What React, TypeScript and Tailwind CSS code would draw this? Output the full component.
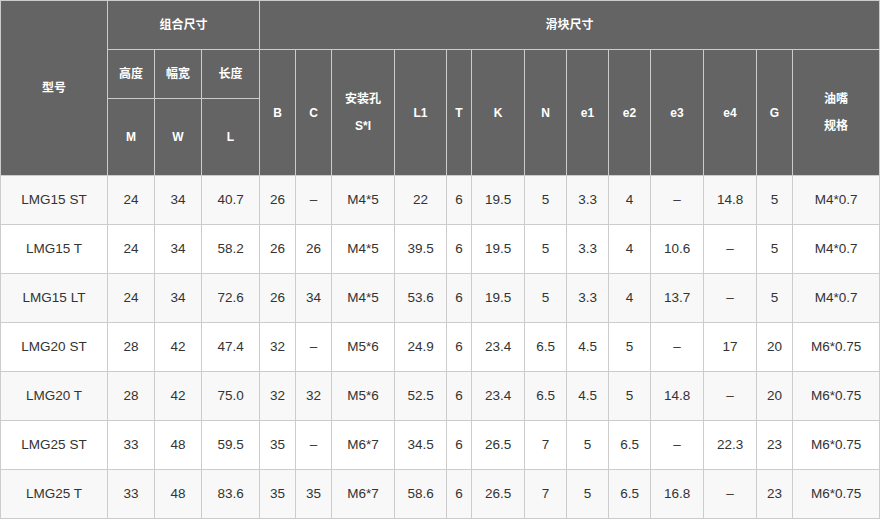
import React from "react";

const rows: string[][] = [
  ["LMG15 ST", "24", "34", "40.7", "26", "–", "M4*5", "22", "6", "19.5", "5", "3.3", "4", "–", "14.8", "5", "M4*0.7"],
  ["LMG15 T", "24", "34", "58.2", "26", "26", "M4*5", "39.5", "6", "19.5", "5", "3.3", "4", "10.6", "–", "5", "M4*0.7"],
  ["LMG15 LT", "24", "34", "72.6", "26", "34", "M4*5", "53.6", "6", "19.5", "5", "3.3", "4", "13.7", "–", "5", "M4*0.7"],
  ["LMG20 ST", "28", "42", "47.4", "32", "–", "M5*6", "24.9", "6", "23.4", "6.5", "4.5", "5", "–", "17", "20", "M6*0.75"],
  ["LMG20 T", "28", "42", "75.0", "32", "32", "M5*6", "52.5", "6", "23.4", "6.5", "4.5", "5", "14.8", "–", "20", "M6*0.75"],
  ["LMG25 ST", "33", "48", "59.5", "35", "–", "M6*7", "34.5", "6", "26.5", "7", "5", "6.5", "–", "22.3", "23", "M6*0.75"],
  ["LMG25 T", "33", "48", "83.6", "35", "35", "M6*7", "58.6", "6", "26.5", "7", "5", "6.5", "16.8", "–", "23", "M6*0.75"],
];

const widths = [107, 47, 47, 58, 36, 36, 63, 52, 25, 53, 42, 42, 42, 53, 53, 36, 87];

const th = "border border-[#cccccc] bg-[#646464] text-white font-bold text-[12px] text-center align-middle p-0";
const td = "border border-[#cccccc] text-[#333333] text-[13.5px] text-center align-middle p-0";

export default function App() {
  return (
    <div className="w-[880px] h-[520px] bg-white" style={{ fontFamily: '"Liberation Sans", Arial, "Noto Sans CJK SC", sans-serif' }}>
      <table className="border-collapse table-fixed w-[880px]">
        <colgroup>
          {widths.map((w, i) => (
            <col key={i} style={{ width: w }} />
          ))}
        </colgroup>
        <thead>
          <tr className="h-[49px]">
            <th rowSpan={3} className={th}>型号</th>
            <th colSpan={3} className={th}>组合尺寸</th>
            <th colSpan={13} className={th}>滑块尺寸</th>
          </tr>
          <tr className="h-[49px]">
            <th className={th}>高度</th>
            <th className={th}>幅宽</th>
            <th className={th}>长度</th>
            <th rowSpan={2} className={th}>B</th>
            <th rowSpan={2} className={th}>C</th>
            <th rowSpan={2} className={th}>
              <div className="flex flex-col items-center gap-[13px] leading-[14px]">
                <span>安装孔</span>
                <span>S*l</span>
              </div>
            </th>
            <th rowSpan={2} className={th}>L1</th>
            <th rowSpan={2} className={th}>T</th>
            <th rowSpan={2} className={th}>K</th>
            <th rowSpan={2} className={th}>N</th>
            <th rowSpan={2} className={th}>e1</th>
            <th rowSpan={2} className={th}>e2</th>
            <th rowSpan={2} className={th}>e3</th>
            <th rowSpan={2} className={th}>e4</th>
            <th rowSpan={2} className={th}>G</th>
            <th rowSpan={2} className={th}>
              <div className="flex flex-col items-center gap-[13px] leading-[14px]">
                <span>油嘴</span>
                <span>规格</span>
              </div>
            </th>
          </tr>
          <tr className="h-[77px]">
            <th className={th}>M</th>
            <th className={th}>W</th>
            <th className={th}>L</th>
          </tr>
        </thead>
        <tbody>
          {rows.map((r, i) => (
            <tr key={i} className={`h-[49px] ${i % 2 === 0 ? "bg-[#f8f8f8]" : "bg-white"}`}>
              {r.map((c, j) => (
                <td key={j} className={td}>{c}</td>
              ))}
            </tr>
          ))}
        </tbody>
      </table>
    </div>
  );
}
